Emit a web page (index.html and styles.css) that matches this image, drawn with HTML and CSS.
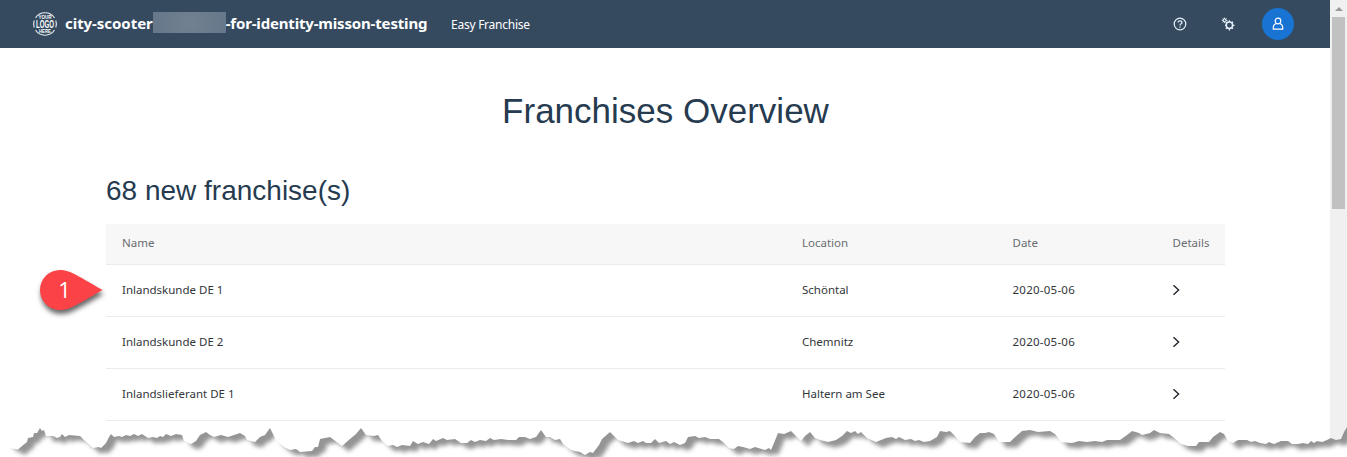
FILE: index.html
```
<!DOCTYPE html>
<html lang="en">
<head>
<meta charset="utf-8">
<title>Easy Franchise</title>
<link rel="stylesheet" href="styles.css">
</head>
<body>
<div class="window">
  <div class="page">
    <header class="shellbar">
      <svg class="logo" viewBox="0 0 24 24" width="24" height="24">
        <path d="M2.500 6A11.300 11.300 0 0 1 21.500 6M2.500 18A11.300 11.300 0 0 0 21.500 18M1.200 8.500A11.300 11.300 0 0 0 1.200 15.500M22.800 8.500A11.300 11.300 0 0 1 22.800 15.500" fill="none" stroke="#e8edf1" stroke-width="1.100"/>
        <text class="logo-small" x="5.500" y="7" textLength="13" lengthAdjust="spacingAndGlyphs">YOUR</text>
        <text class="logo-big" x="3" y="15.800" textLength="18" lengthAdjust="spacingAndGlyphs">LOGO</text>
        <text class="logo-small" x="6" y="21.300" textLength="12" lengthAdjust="spacingAndGlyphs">HERE</text>
      </svg>
      <div class="product"><span class="tenant-a">city-scooter</span><span class="redacted"></span><span class="tenant-b">-for-identity-misson-testing</span></div>
      <div class="subtitle">Easy Franchise</div>
      <div class="actions">
        <svg class="icon" viewBox="0 0 14 14" width="14" height="14" fill="none" stroke="#e4f1fb" stroke-width="1.2">
          <circle cx="7" cy="7" r="5.8"/>
          <path d="M5 5.6C5 3.3 9 3.3 9 5.6 9 6.9 7 6.8 7 8.5M7 9.4v1.4"/>
        </svg>
        <svg class="icon" viewBox="0 0 14 14" width="14" height="14" fill="none" stroke="#e4f1fb">
          <circle cx="8.4" cy="8.3" r="3.2" stroke-width="1.5"/>
          <path d="M8.4 5.1V3.2M8.4 11.5v1.9M5.2 8.3H4M11.6 8.3h1.9M10.7 6l1.3-1.3M10.7 10.6l1.3 1.3M6.1 10.6l-1.2 1.3M6.1 6L5.2 5.1" stroke-width="1.3"/>
          <circle cx="3.6" cy="3.4" r="1.5" stroke-width="1.1"/>
          <path d="M3.6 1.9V.7M3.6 4.9v1.2M2.1 3.4H.8M5.1 3.4h1.2M4.7 2.3l.8-.8M2.5 4.5l-.8.8M2.5 2.3l-.8-.8"/>
        </svg>
        <span class="avatar">
          <svg viewBox="0 0 12 14" width="12" height="14" fill="none" stroke="#fff" stroke-width="1.2">
            <circle cx="6" cy="4" r="2.8"/>
            <path d="M4.2 6.5C2.3 7.2 1.3 8.7 1.3 10.6v1.6h9.4v-1.6C10.700 8.700 9.700 7.200 7.800 6.500"/>
          </svg>
        </span>
      </div>
    </header>
    <main class="content">
      <h1 class="title">Franchises Overview</h1>
      <h2 class="count">68 new franchise(s)</h2>
      <div class="table">
        <div class="row head"><span>Name</span><span>Location</span><span>Date</span><span>Details</span></div>
        <div class="row"><span>Inlandskunde DE 1</span><span>Schöntal</span><span class="date">2020-05-06</span><svg class="chevron" viewBox="0 0 8 12" width="8" height="12"><path d="M.5 1.200L5.600 6 .5 10.800"/></svg></div>
        <div class="row"><span>Inlandskunde DE 2</span><span>Chemnitz</span><span class="date">2020-05-06</span><svg class="chevron" viewBox="0 0 8 12" width="8" height="12"><path d="M.5 1.200L5.600 6 .5 10.800"/></svg></div>
        <div class="row"><span>Inlandslieferant DE 1</span><span>Haltern am See</span><span class="date">2020-05-06</span><svg class="chevron" viewBox="0 0 8 12" width="8" height="12"><path d="M.5 1.200L5.600 6 .5 10.800"/></svg></div>
      </div>
    </main>
  </div>
  <div class="scrollbar"><span class="arrow"></span><span class="thumb"></span></div>
</div>

<svg class="callout" viewBox="0 0 80 60" width="80" height="60">
  <path d="M24 10C33 10 39 14 66.500 30 39 46 33 50 24 50A20 20 0 0 1 24 10Z" fill="#fb4246"/>
  <text x="28.500" y="37.500">1</text>
</svg>

<svg class="torn" viewBox="0 417 1347 40" width="1347" height="40">
  <defs>
    <clipPath id="below"><path d="M0 444L9 448 18 449.500 22 446 27 442 28 438 33 437 34 433 37 433 40 428 42 431 44 430 46 436 50 436 53 436 57 438 60 437 62 434 65 437 69 435 80 436 84 440 93 448 99 447 101 448 106 443 109 437 111 434 114 437 119 436 122 437 126 435 130 436 134 434 138 436 142 434 148 438 153 437 157 438 160 436 163 437 166 434 171 436 176 434 182 435 184 441 191 444 196 441 200 435 206 432 210 435 214 437 221 435 228 437 234 435 240 433 245 436 247 440 255 442 260 437 265 435 270 428 276 440 284 447 290 450 296 449 300 452 312 451 315 447 318 447 320 439 325 438 330 437 334 440 342 446 350 439 356 434 361 428 366 435 374 436 378 435 382 441 388 446 393 445 397 447 402 445 410 446 413 441 418 444 423 442 429 444 433 439 436 441 443 438 447 440 455 439 461 443 467 443 471 440 475 442 480 440 486 441 490 438 494 440 501 439 508 440 516 440 519 437 525 437 530 439 536 437 541 430 546 437 550 437 555 440 560 439 563 444 571 450 575 451 580 452 585 455 590 452 593 453 599 445 602 439 610 432 614 436 618 440 628 443 634 441 638 443 643 441 646 443 651 443 655 439 659 443 666 441 670 444 674 442 680 445 685 443 688 437 695 436 699 438 705 437 710 439 719 439 724 443 729 448 734 449 738 446 743 447 750 449 755 447 765 450 769 448 771 450 774 443 778 433 784 434 791 431 795 435 801 441 805 436 810 432 815 438 820 440 828 442 836 440 842 436 847 431 851 433 855 431 858 434 861 432 867 438 876 442 886 438 892 437 896 439 899 437 905 440 911 439 915 441 919 440 924 442 930 441 937 437 940 431 946 432 950 431 955 436 960 442 970 443 975 437 980 433 985 433 989 432 994 434 999 442 1010 442 1014 438 1022 431 1030 430 1038 432 1050 431 1055 434 1061 442 1072 443 1079 441 1087 442 1095 441 1102 442 1107 440 1120 440 1127 435 1132 431 1139 433 1142 435 1150 433 1154 430 1160 433 1169 434 1173 437 1181 444 1188 446 1196 446 1199 442 1209 442 1213 437 1220 432 1224 434 1228 441 1233 443 1238 440 1247 440 1251 442 1255 441 1260 443 1266 444 1269 442 1274 444 1281 441 1288 441 1292 444 1298 444 1303 443 1308 444 1311 441 1314 443 1317 441 1322 442 1327 440 1331 438 1336 440 1341 439 1344 432 1347 427V460H0Z"/></clipPath>
    <filter id="soft" x="-30" y="380" width="1400" height="90" filterUnits="userSpaceOnUse"><feGaussianBlur stdDeviation="2"/></filter>
  </defs>
  <g clip-path="url(#below)">
    <rect y="417" width="1347" height="40" fill="#fff"/>
    <path id="shade" class="shade" filter="url(#soft)"/>
  </g>
</svg>
<script src="torn.js"></script>
</body>
</html>
```
FILE: styles.css
```
* { box-sizing: border-box; }
body { margin: 0; background: #fff; overflow: hidden; font-family: "Noto Sans", "Liberation Sans", sans-serif; }
.window { display: flex; width: 1347px; height: 457px; overflow: hidden; }
.page { width: 1330px; }
.shellbar { display: flex; align-items: center; height: 48px; padding: 0 36px 0 33px; background: #354a5f; color: #fff; }
.logo { flex: none; margin-right: 8px; overflow: visible; }
.logo text { fill: #fff; font-family: "Liberation Sans", sans-serif; font-weight: 700; }
.logo .logo-small { font-size: 5.5px; }
.logo .logo-big { font-size: 10.5px; }
.product { display: flex; align-items: center; width: 362px; padding-bottom: 2px; font-size: 15px; font-weight: 700; line-height: 24px; white-space: nowrap; }
.tenant-a { width: 88px; letter-spacing: -0.05px; }
.tenant-b { letter-spacing: -0.17px; }
.redacted { flex: none; width: 73px; height: 21px; margin-top: -1px; background: radial-gradient(circle, #728191, #65778a); }
.subtitle { margin-left: 24px; font-size: 12px; letter-spacing: -0.25px; white-space: nowrap; }
.actions { display: flex; align-items: center; margin-left: auto; }
.icon { margin-right: 34px; }
.icon + .icon { margin-right: 27px; }
.avatar { display: flex; align-items: center; justify-content: center; width: 32px; height: 32px; border-radius: 50%; background: #1873d3; }
.content { width: 1119px; margin: 0 0 0 106px; }
.title, .count { margin: 0; color: #263b50; font-family: "Liberation Sans", Arial, sans-serif; font-weight: 400; white-space: nowrap; }
.title { padding-top: 42px; font-size: 35px; line-height: 42px; text-align: center; }
.count { padding-top: 42px; font-size: 28px; line-height: 34px; }
.table { margin-top: 16px; color: #32363a; font-size: 11.5px; }
.row { display: grid; grid-template-columns: 680px 210.500px 160px 1fr; align-items: center; height: 52px; padding: 0 0 2px 16px; border-bottom: 1px solid #ebebeb; }
.head { height: 41px; padding-bottom: 4px; background: #f7f7f7; color: #6a6d70; }
.date { letter-spacing: 0.25px; }
.chevron { fill: none; stroke: #20252b; stroke-width: 1.4; }
.scrollbar { display: flex; flex-direction: column; align-items: center; width: 17px; background: #f0f0f0; }
.arrow { width: 0; margin: 7px 0 6px; border: 4px solid transparent; border-top-width: 0; border-bottom-color: #999; }
.thumb { width: 13px; height: 192px; background: #c1c1c1; }
.callout { position: absolute; left: 36px; top: 260px; overflow: visible; }
.callout path { filter: drop-shadow(1px 4px 2.500px rgba(0, 0, 0, .6)); }
.callout text { fill: #fff; font: 22px "Open Sans", sans-serif; text-anchor: middle; }
.torn { position: absolute; left: 0; top: 417px; }
.shade { fill: #949494; }
```
FILE: torn.js
```
// The shadow is the upper sheet's outline, shifted down and to the right.
const edge = document.querySelector('#below path').getAttribute('d');
const shade = document.getElementById('shade');
shade.setAttribute('d', edge.replace('M0 444L9 448', 'M-20 410L0 434 9 445').replace('V460H0Z', 'L1370 400V380H-20Z'));
shade.setAttribute('transform', 'translate(7 5.5)');
```
